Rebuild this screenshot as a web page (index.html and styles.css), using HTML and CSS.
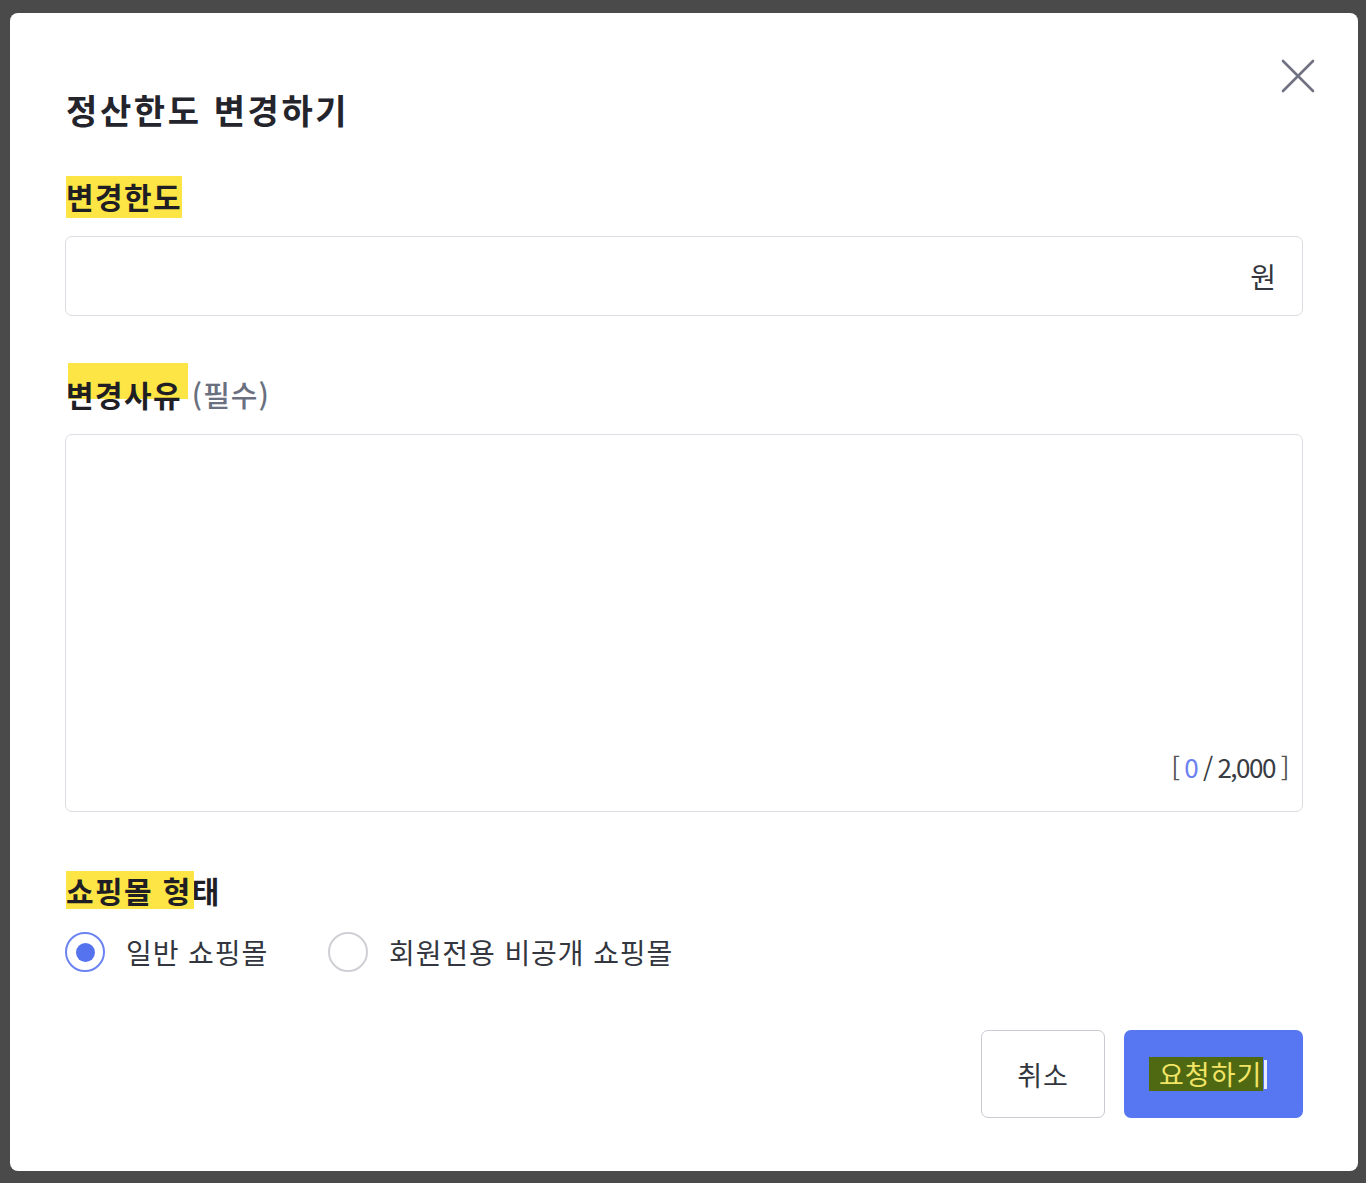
FILE: index.html
```html
<!DOCTYPE html>
<html lang="ko">
<head>
<meta charset="utf-8">
<title>정산한도 변경하기</title>
<link rel="stylesheet" href="styles.css">
</head>
<body>
<div class="modal">
  <button class="close" aria-label="닫기">
    <svg width="36" height="36" viewBox="0 0 36 36"><path d="M3 3 L33 33 M33 3 L3 33" stroke="#6e7282" stroke-width="2.6" stroke-linecap="round" fill="none"/></svg>
  </button>
  <h1 class="title">정산한도 변경하기</h1>

  <div class="label label-1"><span class="hl hl-1">변경한도</span></div>
  <div class="input-box"><span class="unit">원</span></div>

  <div class="label label-2"><span class="hl hl-2">변경사유</span> <span class="req">(필수)</span></div>
  <div class="textarea-box"><span class="counter"><span class="br">[</span> <span class="cur">0</span> / 2,000 <span class="br">]</span></span></div>

  <div class="label label-3"><span class="hl hl-3">쇼핑몰 형</span>태</div>
  <div class="radios">
    <label class="radio"><span class="circle on"></span><span class="rtext">일반 쇼핑몰</span></label>
    <label class="radio"><span class="circle"></span><span class="rtext">회원전용 비공개 쇼핑몰</span></label>
  </div>

  <div class="actions">
    <button class="btn cancel">취소</button>
    <button class="btn primary"><span class="sel">요청하기</span><span class="caret"></span></button>
  </div>
</div>
</body>
</html>
```

FILE: styles.css
```css
* { box-sizing: border-box; }
html, body { margin: 0; padding: 0; }
body {
  background: #4a4a4b;
  font-family: "Noto Sans CJK KR", "Noto Sans", sans-serif;
  color: #222;
  height: 1183px;
  overflow: hidden;
}
.modal {
  position: relative;
  margin: 13px 8px 0 10px;
  height: 1158px;
  background: #fff;
  border-radius: 8px;
  padding: 73px 55px 0 55px;
}
.close {
  position: absolute;
  top: 45px;
  right: 42px;
  width: 36px;
  height: 36px;
  padding: 0;
  border: 0;
  background: none;
}
.close svg { display: block; }
.title {
  margin: 0;
  font-size: 34px;
  line-height: 48px;
  font-weight: 700;
  color: #24242c;
  padding-left: 1px;
  letter-spacing: 2.6px;
}
.label {
  font-size: 30px;
  line-height: 40px;
  font-weight: 700;
  color: #1e1e24;
  padding-left: 1px;
  letter-spacing: 1.4px;
}
.label-1 { margin-top: 42px; }
.label-2 { margin-top: 58px; }
.label-3 { margin-top: 58px; }
.hl { position: relative; z-index: 0; }
.hl::before {
  content: "";
  position: absolute;
  z-index: -1;
  background: #fde545;
}
.hl-1::before { left: 0; right: 0; top: 2px; bottom: 0; }
.hl-2::before { left: 2px; right: -6px; top: -9px; bottom: 17px; }
.hl-3::before { left: 0; right: -2px; top: 3px; bottom: 3px; }
.req {
  font-weight: 500;
  color: #6a7080;
  font-size: 29px;
  letter-spacing: 1px;
}
.input-box {
  margin-top: 20px;
  height: 80px;
  border: 1px solid #dcdde3;
  border-radius: 7px;
  display: flex;
  align-items: center;
  justify-content: flex-end;
  padding-right: 26px;
}
.unit { font-size: 28px; color: #33363e; }
.textarea-box {
  margin-top: 20px;
  height: 378px;
  border: 1px solid #dcdde3;
  border-radius: 7px;
  display: flex;
  align-items: flex-end;
  justify-content: flex-end;
  padding: 0 14px 27px 0;
}
.counter {
  font-size: 26px;
  line-height: 34px;
  color: #3a3c44;
  letter-spacing: -1.5px;
}
.counter .br { color: #555; }
.counter .cur { color: #6b80f0; }
.radios {
  margin-top: 20px;
  height: 44px;
  display: flex;
  align-items: center;
  gap: 60px;
}
.radio {
  display: flex;
  align-items: center;
  gap: 21px;
}
.circle {
  width: 40px;
  height: 40px;
  border-radius: 50%;
  border: 2px solid #cfd0d6;
  display: flex;
  align-items: center;
  justify-content: center;
}
.circle.on { border-color: #6b84f2; }
.circle.on::after {
  content: "";
  width: 19px;
  height: 19px;
  border-radius: 50%;
  background: #5573ef;
}
.rtext {
  font-size: 28px;
  color: #33363e;
  letter-spacing: 0.9px;
}
.actions {
  margin-top: 56px;
  display: flex;
  justify-content: flex-end;
  gap: 19px;
}
.btn {
  height: 88px;
  border-radius: 7px;
  font-family: inherit;
  font-size: 27px;
  padding: 0;
  display: flex;
  align-items: center;
  justify-content: center;
  letter-spacing: 1px;
}
.cancel {
  width: 124px;
  background: #fff;
  border: 1.5px solid #c9cad2;
  color: #33363e;
}
.primary {
  width: 179px;
  background: #5677f1;
  border: 0;
  color: #fff;
  justify-content: flex-start;
  padding-left: 25px;
}
.sel {
  background: #4e6912;
  color: #f3e566;
  padding: 0 1px 0 10px;
  line-height: 34px;
}
.caret {
  width: 3px;
  height: 29px;
  background: #e8ecff;
  margin-left: 1px;
}
```
